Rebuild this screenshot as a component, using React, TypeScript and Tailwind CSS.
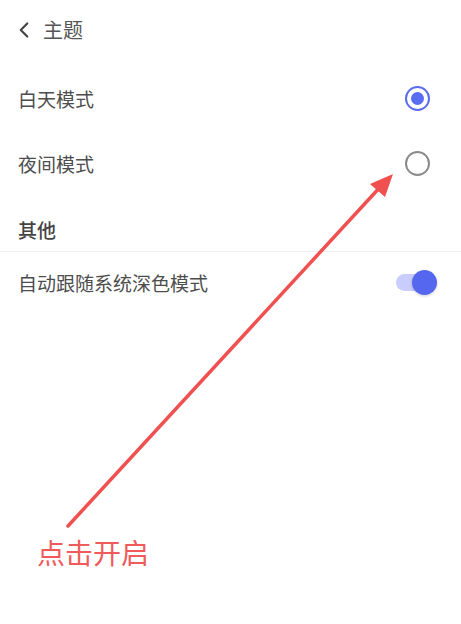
import { ChevronLeft } from "lucide-react"

const font = { fontFamily: '"Noto Sans CJK SC", "Noto Sans", sans-serif' }

function Radio({ checked }: { checked: boolean }) {
  return checked ? (
    <div className="flex h-[25px] w-[25px] items-center justify-center rounded-full border-[2.5px] border-[#5a6cf1]">
      <div className="h-[13px] w-[13px] rounded-full bg-[#5a6cf1]" />
    </div>
  ) : (
    <div className="h-[25px] w-[25px] rounded-full border-2 border-[#8a8a8a]" />
  )
}

function Toggle() {
  return (
    <div className="relative h-[25px] w-[44px]">
      <div className="absolute left-0 top-[4px] h-[17px] w-[34px] rounded-full bg-[#c8cdfb]" />
      <div className="absolute right-[3px] top-0 h-[25px] w-[25px] rounded-full bg-[#5467ee] shadow-[0_1px_3px_rgba(0,0,0,0.2)]" />
    </div>
  )
}

export default function App() {
  return (
    <div className="relative h-[624px] w-[461px] overflow-hidden bg-white text-[#4d4d4d]" style={font}>
      <div className="flex h-[60px] items-center pl-[11px]">
        <ChevronLeft className="h-[26px] w-[26px] text-[#444]" strokeWidth={2} />
        <span className="ml-[6px] text-[20px] leading-none text-[#555]">主题</span>
      </div>

      <div className="flex h-[64px] items-center justify-between pl-[18px] pr-[31px] pt-[13px]">
        <span className="text-[19px] leading-none">白天模式</span>
        <Radio checked />
      </div>
      <div className="flex h-[78px] items-center justify-between pl-[18px] pr-[31px]">
        <span className="text-[19px] leading-none">夜间模式</span>
        <Radio checked={false} />
      </div>

      <div className="flex h-[50px] items-center border-b border-[#f0f0f0] pl-[18px] pt-[6px]">
        <span className="text-[19px] font-medium leading-none text-[#444]">其他</span>
      </div>

      <div className="flex h-[60px] items-center justify-between pl-[18px] pr-[21px]">
        <span className="text-[19px] leading-none">自动跟随系统深色模式</span>
        <Toggle />
      </div>

      <svg className="pointer-events-none absolute left-0 top-0" width="461" height="624" viewBox="0 0 461 624">
        <line x1="68" y1="526" x2="382" y2="185" stroke="#f05050" strokeWidth="3.5" strokeLinecap="round" />
        <polygon points="393,174 370,184 385,197" fill="#f05050" />
      </svg>

      <div className="absolute left-[37px] top-[538px] text-[28px] leading-none text-[#f05a5a]">点击开启</div>
    </div>
  )
}
